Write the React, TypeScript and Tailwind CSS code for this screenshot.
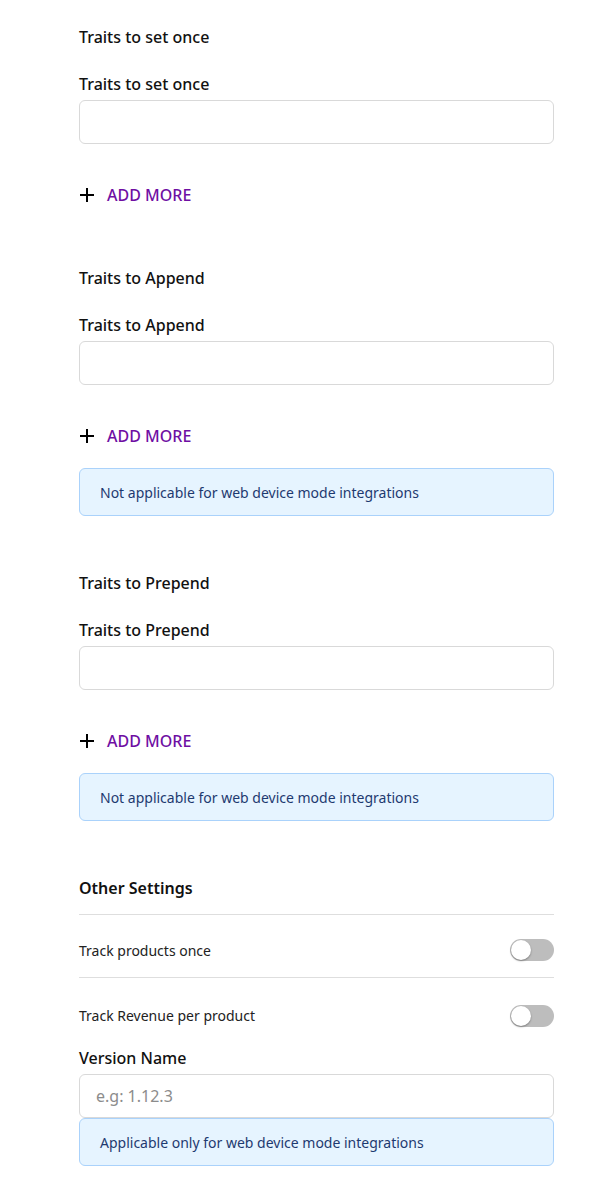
const font = { fontFamily: '"Noto Sans", "Open Sans", sans-serif' };

function AddMore() {
  return (
    <button className="flex h-6 items-center gap-[13px] text-[16px] font-medium uppercase text-[#6f0fa3]">
      <svg width="14" height="14" viewBox="0 0 14 14" className="ml-px">
        <path d="M7 0v14M0 7h14" stroke="#000" strokeWidth="2" />
      </svg>
      Add more
    </button>
  );
}

function Info({ text }: { text: string }) {
  return (
    <div className="flex h-12 items-center rounded-md border border-[#aad2fb] bg-[#e6f4ff] px-5 text-[14px] text-[#1e3a70]">
      {text}
    </div>
  );
}

function TraitSection({ title, note }: { title: string; note?: string }) {
  return (
    <div className="flex flex-col">
      <h3 className="text-[16px] font-medium leading-6 text-[#111]">{title}</h3>
      <label className="mt-[23px] text-[16px] font-medium leading-6 text-[#111]">{title}</label>
      <input className="mt-1 h-11 rounded-md border border-[#d9d9d9] px-4 outline-none" />
      <div className="mt-[39px]">
        <AddMore />
      </div>
      {note && (
        <div className="mt-5">
          <Info text={note} />
        </div>
      )}
    </div>
  );
}

function Toggle() {
  return (
    <div className="relative h-[22px] w-11 rounded-full bg-[#bdbdbd]">
      <div className="absolute left-px top-px h-5 w-5 rounded-full bg-white shadow-[0_1px_2px_rgba(0,0,0,0.35)]" />
    </div>
  );
}

export default function App() {
  const notApplicable = 'Not applicable for web device mode integrations';
  return (
    <div className="min-h-screen bg-white" style={font}>
      <div className="ml-[79px] flex w-[475px] flex-col pt-[25px]">
        <TraitSection title="Traits to set once" />
        <div className="mt-[59px]">
          <TraitSection title="Traits to Append" note={notApplicable} />
        </div>
        <div className="mt-[55px]">
          <TraitSection title="Traits to Prepend" note={notApplicable} />
        </div>

        <h3 className="mt-[55px] text-[16px] font-semibold leading-6 text-[#111]">Other Settings</h3>
        <div className="mt-[14px] border-t border-[#dedede]">
          <div className="flex h-[63px] items-center justify-between border-b border-[#dedede] pt-2">
            <span className="text-[14px] text-[#222]">Track products once</span>
            <Toggle />
          </div>
          <div className="flex h-[63px] items-center justify-between pt-3">
            <span className="text-[14px] text-[#222]">Track Revenue per product</span>
            <Toggle />
          </div>
        </div>

        <label className="mt-[5px] text-[16px] font-medium leading-6 text-[#111]">Version Name</label>
        <input
          placeholder="e.g: 1.12.3"
          className="mt-1 h-11 rounded-md border border-[#d9d9d9] px-4 text-[16px] outline-none placeholder:text-[#8c8c8c]"
        />
        <Info text="Applicable only for web device mode integrations" />
      </div>
    </div>
  );
}
